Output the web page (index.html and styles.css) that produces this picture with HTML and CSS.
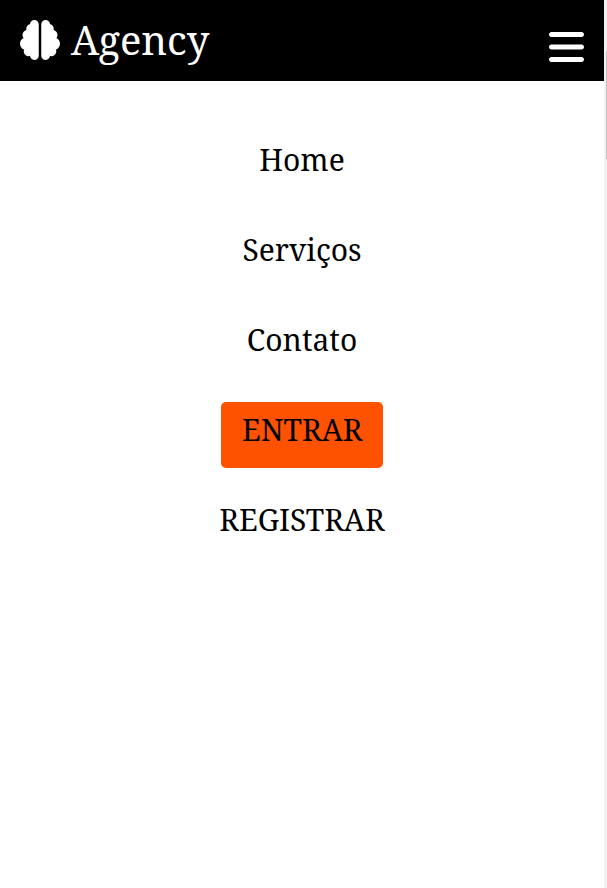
FILE: index.html
```html
<!DOCTYPE html>
<html lang="pt-BR">
<head>
<meta charset="utf-8">
<title>Agency</title>
<link rel="stylesheet" href="styles.css">
</head>
<body>
<div class="page">
  <header class="header">
    <a class="logo">
      <svg class="brain" viewBox="0 0 512 512" aria-hidden="true"><path d="M184 0c30.9 0 56 25.1 56 56V456c0 30.9-25.1 56-56 56c-28.9 0-52.7-21.9-55.7-50.1c-5.2 1.4-10.7 2.1-16.3 2.1c-35.3 0-64-28.7-64-64c0-7.4 1.3-14.6 3.6-21.2C21.4 367.4 0 338.2 0 304c0-31.9 18.7-59.5 45.8-72.3C37.1 220.8 32 207 32 192c0-30.7 21.6-56.3 50.4-62.6C80.8 123.9 80 118 80 112c0-29.9 20.6-55.1 48.3-62.1C131.3 21.9 155.1 0 184 0zM328 0c28.9 0 52.6 21.9 55.7 49.9c27.8 7 48.3 32.1 48.3 62.1c0 6-.8 11.9-2.4 17.4c28.8 6.2 50.4 31.9 50.4 62.6c0 15-5.1 28.8-13.8 39.7C493.3 244.5 512 272.1 512 304c0 34.2-21.4 63.4-51.6 74.8c2.3 6.6 3.6 13.8 3.6 21.2c0 35.3-28.7 64-64 64c-5.6 0-11.1-.7-16.3-2.1c-3 28.2-26.8 50.1-55.7 50.1c-30.9 0-56-25.1-56-56V56c0-30.9 25.1-56 56-56z"/></svg>
      <span class="name">Agency</span>
    </a>
    <svg class="bars" viewBox="0 0 448 512" aria-hidden="true"><path d="M0 96C0 78.3 14.3 64 32 64H416c17.7 0 32 14.3 32 32s-14.3 32-32 32H32C14.3 128 0 113.7 0 96zM0 256c0-17.7 14.3-32 32-32H416c17.7 0 32 14.3 32 32s-14.3 32-32 32H32c-17.7 0-32-14.3-32-32zM448 416c0 17.7-14.3 32-32 32H32c-17.7 0-32-14.3-32-32s14.3-32 32-32H416c17.7 0 32 14.3 32 32z"/></svg>
  </header>
  <nav class="menu">
    <a class="item home"><span>Home</span></a>
    <a class="item"><span>Serviços</span></a>
    <a class="item"><span>Contato</span></a>
    <a class="item button"><span>ENTRAR</span></a>
    <a class="item"><span>REGISTRAR</span></a>
  </nav>
</div>
<div class="scrollbar"><div class="thumb"></div></div>
</body>
</html>
```
FILE: styles.css
```css
* { box-sizing: border-box; }
body {
  margin: 0;
  height: 888px;
  display: flex;
  overflow: hidden;
  background: #fff;
  color: #000;
  font-family: "Noto Serif", "Droid Serif", "DejaVu Serif Condensed", "DejaVu Serif", serif;
}
.page { width: 604px; }
.header {
  height: 81px;
  padding: 20px;
  background: #000;
  color: #fff;
  display: flex;
  justify-content: space-between;
}
.logo { display: flex; gap: 11px; height: 40px; }
.brain { width: 40px; height: 40px; fill: #fff; }
.name { font-size: 40px; line-height: 40px; white-space: nowrap; }
.bars { width: 35px; height: 40px; margin-top: 7px; fill: #fff; }
.menu {
  padding-top: 51px;
  display: flex;
  flex-direction: column;
  align-items: center;
  gap: 24px;
}
.item { height: 66px; padding: 0 21px; font-size: 30px; line-height: 56px; white-space: nowrap; }
.button { width: 162px; background: #ff5200; border-radius: 5px; }
.scrollbar { width: 3px; height: 888px; background: #f1f1f1; padding: 51px 0 0 2px; }
.thumb { width: 1px; height: 108px; background: #c1c1c1; }
```
